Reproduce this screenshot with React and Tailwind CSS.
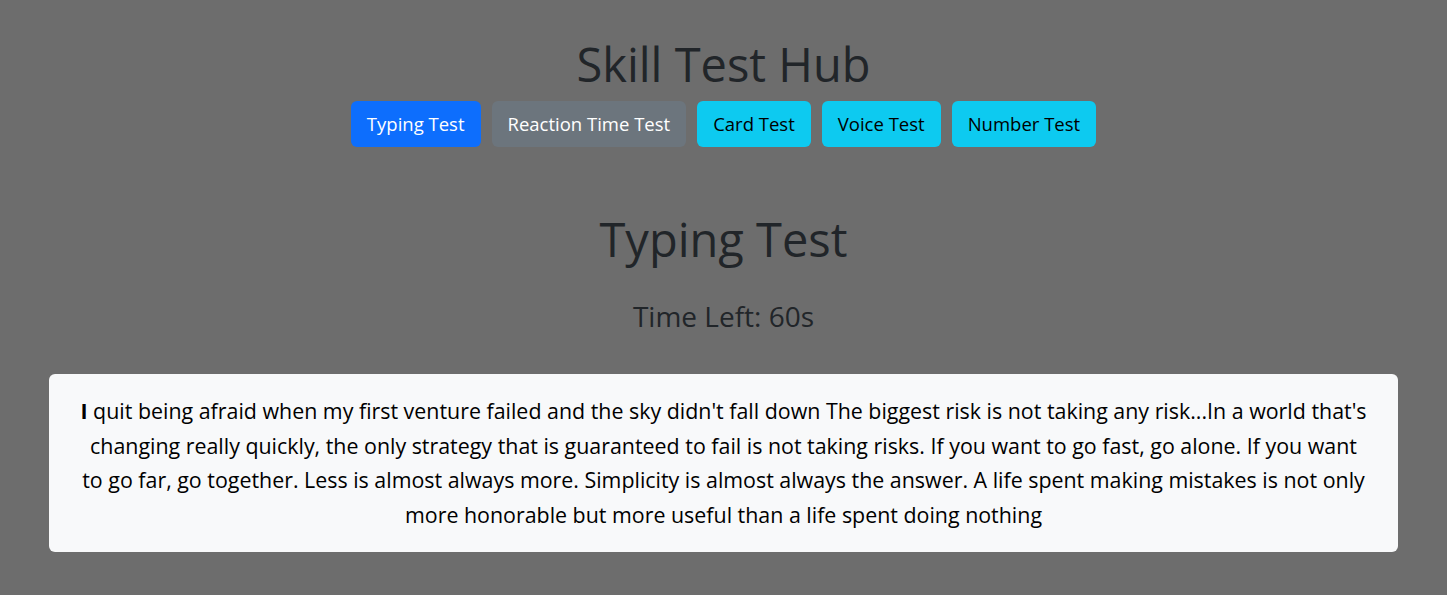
const buttons = [
  { label: 'Typing Test', cls: 'bg-[#0d6efd] text-white' },
  { label: 'Reaction Time Test', cls: 'bg-[#6c757d] text-white' },
  { label: 'Card Test', cls: 'bg-[#0dcaf0] text-black' },
  { label: 'Voice Test', cls: 'bg-[#0dcaf0] text-black' },
  { label: 'Number Test', cls: 'bg-[#0dcaf0] text-black' },
]

export default function App() {
  return (
    <div className="min-h-[595px] bg-[#6d6d6d] font-['Open_Sans','Noto_Sans',sans-serif] text-[#212529] flex flex-col items-center pt-[39px]">
      <h1 className="text-[47px] leading-[50px]">Skill Test Hub</h1>

      <div className="mt-[12px] flex gap-[11px]">
        {buttons.map((b) => (
          <button key={b.label} className={`h-[46px] px-4 rounded-[6px] text-[18.5px] ${b.cls}`}>
            {b.label}
          </button>
        ))}
      </div>

      <h2 className="mt-[63px] text-[47px] leading-[58px]">Typing Test</h2>
      <h4 className="mt-[32px] text-[28px] leading-[32px]">Time Left: 60s</h4>

      <div className="mt-[42px] w-[1349px] bg-[#f8f9fa] rounded-[6px] px-5 py-[20px] text-center text-black text-[21.4px] leading-[34.5px]">
        <p>
          <strong>I</strong> quit being afraid when my first venture failed and the sky didn't fall down The biggest risk is not taking any risk...In a world that's
          <br />
          changing really quickly, the only strategy that is guaranteed to fail is not taking risks. If you want to go fast, go alone. If you want
          <br />
          to go far, go together. Less is almost always more. Simplicity is almost always the answer. A life spent making mistakes is not only
          <br />
          more honorable but more useful than a life spent doing nothing
        </p>
      </div>
    </div>
  )
}
